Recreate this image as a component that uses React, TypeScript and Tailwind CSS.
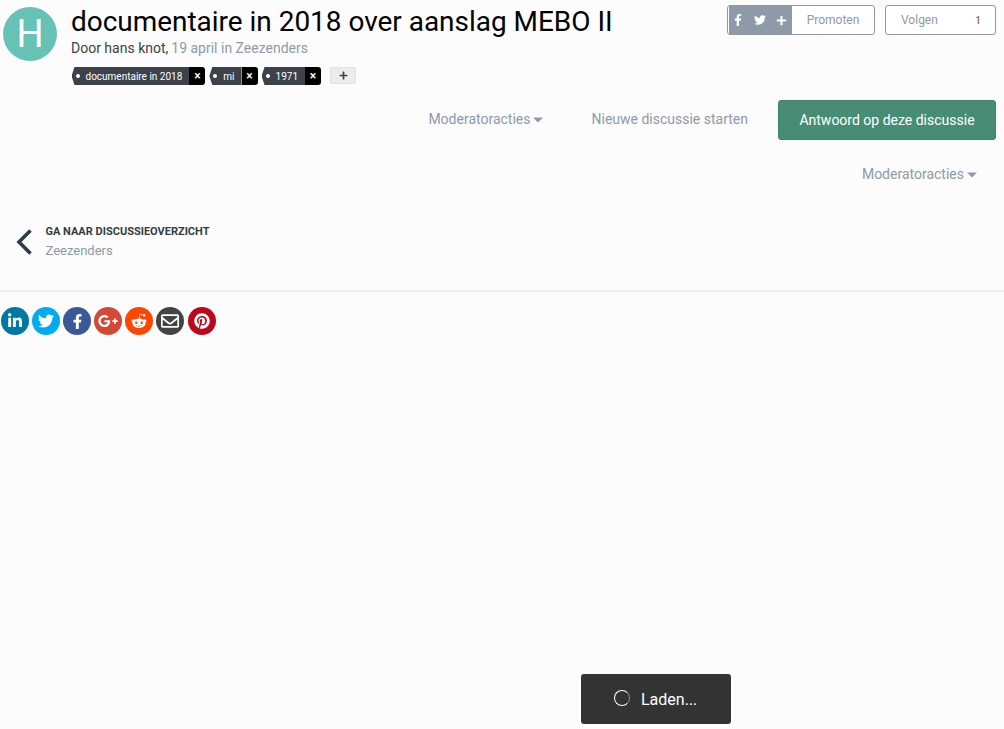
import { FaFacebookF, FaTwitter, FaPlus, FaLinkedinIn, FaGooglePlusG, FaRedditAlien, FaRegEnvelope, FaPinterest } from 'react-icons/fa';

const tags = ['documentaire in 2018', 'mi', '1971'];

const shares = [
  { icon: FaLinkedinIn, bg: 'bg-[#0077a5]', size: 16 },
  { icon: FaTwitter, bg: 'bg-[#00acee]', size: 16 },
  { icon: FaFacebookF, bg: 'bg-[#3b5998]', size: 15 },
  { icon: FaGooglePlusG, bg: 'bg-[#d34836]', size: 20 },
  { icon: FaRedditAlien, bg: 'bg-[#ff4500]', size: 16 },
  { icon: FaRegEnvelope, bg: 'bg-[#444444]', size: 18 },
  { icon: FaPinterest, bg: 'bg-[#bd081c]', size: 16 },
];

function Caret() {
  return (
    <svg width="10" height="6" viewBox="0 0 10 6" className="mt-[1px] shrink-0">
      <path d="M0 0.5h10L5 5.5z" fill="currentColor" />
    </svg>
  );
}

function Tag({ label }: { label: string }) {
  return (
    <span className="flex h-[18px] items-center overflow-hidden rounded-r-[3px]">
      <span className="flex h-full items-center gap-[6px] bg-[#3d4149] pr-[7px] pl-[4px] text-[10px] text-white [clip-path:polygon(3px_0,100%_0,100%_100%,3px_100%,0_50%)]">
        <span className="h-[4px] w-[4px] rounded-full bg-white" />
        {label}
      </span>
      <span className="flex h-full w-[16px] items-center justify-center bg-black text-[12px] font-medium text-white">×</span>
    </span>
  );
}

export default function App() {
  return (
    <div className="min-h-screen bg-[#fcfcfc] font-['Roboto',sans-serif] text-[#8e9aa8]">
      <div className="flex items-start justify-between pr-[8px] pl-[3px]">
        <div className="flex gap-[14px] pt-[7px]">
          <div className="flex h-[54px] w-[54px] shrink-0 items-center justify-center rounded-full bg-[#66c2b4] text-[38px] leading-none text-white">
            H
          </div>
          <div>
            <h1 className="mt-[-1px] text-[27.95px] leading-[32px] text-black">documentaire in 2018 over aanslag MEBO II</h1>
            <p className="mt-[1px] text-[14px] leading-[18px]">
              <span className="text-[#3d4149]">Door hans knot,</span>
              <span className="ml-[3px]">19 april in Zeezenders</span>
            </p>
            <div className="mt-[10px] ml-[0.5px] flex items-center gap-[4px]">
              {tags.map((t) => (
                <Tag key={t} label={t} />
              ))}
              <span className="ml-[5px] flex h-[17px] w-[26px] items-center justify-center self-start rounded-[2px] border border-[#e2e2e2] bg-[#ececec] text-[#3d4149]">
                <FaPlus size={9} />
              </span>
            </div>
          </div>
        </div>
        <div className="flex gap-[10px] pt-[5px]">
          <div className="flex h-[30px] w-[148px] overflow-hidden rounded-[3px] border border-[#8e9aa8] bg-white text-[12px]">
            <span className="ml-[1px] flex w-[63px] items-center justify-center gap-[10px] bg-[#8e9aa8] pr-[2px] text-white">
              <FaFacebookF size={12} />
              <FaTwitter size={12} />
              <FaPlus size={11} />
            </span>
            <span className="flex flex-1 items-center justify-center">Promoten</span>
          </div>
          <div className="flex h-[30px] w-[111px] items-center justify-between rounded-[3px] border border-[#8e9aa8] bg-white pr-[14px] pl-[15px] text-[12px]">
            <span>Volgen</span>
            <span className="text-[10px] font-medium text-[#8a6d3b]">1</span>
          </div>
        </div>
      </div>

      <div className="mt-[15px] flex items-center justify-end pr-[8px] text-[14px]">
        <span className="flex items-center gap-[3px] pb-[1px]">
          Moderatoracties <Caret />
        </span>
        <span className="ml-[48px] pb-[1px]">Nieuwe discussie starten</span>
        <span className="ml-[30px] flex h-[40px] w-[218px] items-center justify-center rounded-[3px] border border-[#41836d] bg-[#478d76] pt-[1px] text-white">
          Antwoord op deze discussie
        </span>
      </div>

      <div className="mt-[24px] flex justify-end pr-[27px] text-[14px]">
        <span className="flex items-center gap-[3px]">
          Moderatoracties <Caret />
        </span>
      </div>

      <div className="mt-[39px] flex items-center gap-[13.5px] pl-[16px]">
        <svg width="16" height="26" viewBox="0 0 16 26" fill="none" className="text-[#2f3c48]">
          <path d="M14.5 1.5 3 13l11.5 11.5" stroke="currentColor" strokeWidth="3.6" />
        </svg>
        <div>
          <p className="text-[11px] leading-[16px] font-bold text-[#353c41] uppercase">Ga naar discussieoverzicht</p>
          <p className="mt-[2px] text-[13px] leading-[18px]">Zeezenders</p>
        </div>
      </div>

      <div className="mt-[30px] h-[2px] bg-[#eeeeee]" />

      <div className="mt-[15px] flex gap-[3.1px] pl-[1px]">
        {shares.map(({ icon: Icon, bg, size }, i) => (
          <span key={i} className={`flex h-[28px] w-[28px] items-center justify-center rounded-full text-white ${bg}`}>
            <Icon size={size} />
          </span>
        ))}
      </div>

      <div className="fixed right-[273px] bottom-[5px] flex h-[50px] w-[150px] items-center gap-[11px] rounded-[3px] bg-[#333333] pl-[33px] text-[16px] text-white">
        <span className="mb-[2px] h-[16px] w-[16px] rounded-full border-[1.5px] border-white border-r-[#888888]" />
        <span className="pt-[1px]">Laden...</span>
      </div>
    </div>
  );
}
